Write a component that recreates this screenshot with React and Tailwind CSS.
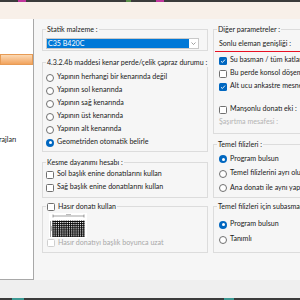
import React from "react";

function Radio({ checked, label }) {
  return (
    <div className="flex items-center gap-[3px] h-full">
      {checked ? (
        <span className="w-[8px] h-[8px] rounded-full bg-[#0067c0] flex items-center justify-center shrink-0">
          <span className="w-[3px] h-[3px] rounded-full bg-white" />
        </span>
      ) : (
        <span className="w-[8px] h-[8px] rounded-full border border-[#707070] bg-white shrink-0" />
      )}
      <span className="whitespace-nowrap">{label}</span>
    </div>
  );
}

function Check({ checked, label, disabled }) {
  return (
    <div className="flex items-center gap-[3px] h-full">
      {checked ? (
        <span className="w-[8px] h-[8px] rounded-[1.5px] bg-[#0067c0] flex items-center justify-center shrink-0">
          <svg width="6" height="6" viewBox="0 0 6 6">
            <path d="M1 3.2 L2.4 4.5 L5 1.6" stroke="white" strokeWidth="0.9" fill="none" />
          </svg>
        </span>
      ) : (
        <span
          className={`w-[8px] h-[8px] rounded-[1.5px] border bg-white shrink-0 ${
            disabled ? "border-[#cfcfcf]" : "border-[#707070]"
          }`}
        />
      )}
      <span className={`whitespace-nowrap ${disabled ? "text-[#a8a8a8]" : ""}`}>{label}</span>
    </div>
  );
}

function Group({ title, className, children, pad = "pl-[3px]" }) {
  return (
    <div className={`border border-[#dcdcdc] ${className}`}>
      <div className={`-mt-[5px] ${pad} flex`}>
        <div className="bg-[#f6f6f6] leading-[9px] h-[9px] px-[1px] whitespace-nowrap flex items-center">
          {title}
        </div>
      </div>
      <div className={pad}>{children}</div>
    </div>
  );
}

// hasır donatı preview drawing
function Mesh() {
  const vs = [];
  for (let i = 0; i <= 14; i++) vs.push(4 + i * 2.2);
  const hs = [];
  for (let i = 0; i <= 7; i++) hs.push(8.5 + i * 2.1);
  return (
    <svg width="38" height="25" viewBox="0 0 38 25" className="bg-white">
      <line x1="4" y1="3" x2="35" y2="3" stroke="#444" strokeWidth="0.5" />
      <line x1="4" y1="1.5" x2="4" y2="4.5" stroke="#444" strokeWidth="0.5" />
      <line x1="35" y1="1.5" x2="35" y2="4.5" stroke="#444" strokeWidth="0.5" />
      <rect x="17" y="1" width="5" height="1.2" fill="#bbb" />
      <line x1="1.5" y1="8" x2="1.5" y2="24" stroke="#444" strokeWidth="0.5" />
      <rect x="2" y="13" width="1" height="5" fill="#bbb" />
      {vs.map((x) => (
        <line key={"v" + x} x1={x} y1="7.5" x2={x} y2="24" stroke="#0a0a0a" strokeWidth="1" />
      ))}
      {hs.map((y) => (
        <line key={"h" + y} x1="3.5" y1={y} x2="35.5" y2={y} stroke="#0a0a0a" strokeWidth="1" />
      ))}
    </svg>
  );
}

export default function App() {
  return (
    <div className="w-[300px] h-[300px] overflow-hidden flex flex-col font-['Lato','Noto_Sans',sans-serif] text-[7.1px] text-[#1a1a1a] bg-[#f6f6f6]">
      {/* top taskbar strip */}
      <div className="h-[2px] bg-[#3b3b3b] flex shrink-0">
        <div className="w-[18px]" />
        <div className="w-[8px] bg-[#c0359c]" />
        <div className="w-[100px]" />
        <div className="w-[5px] bg-[#5b8f4a]" />
        <div className="w-[25px]" />
        <div className="w-[8px] bg-[#c0359c]" />
      </div>
      <div className="h-[17px] bg-[#f8f0e9] shrink-0" />

      <div className="flex h-[261px] shrink-0">
        {/* left list panel */}
        <div className="w-[34px] bg-white border-r border-b border-[#a8a8a8] shrink-0 flex flex-col">
          <div className="mt-[35px] h-[11px] w-[33px] border border-[#e79b55] bg-gradient-to-b from-[#fbd9b4] to-[#f1a35c]" />
          <div className="mt-[70px] leading-[9px] -ml-[1px]">rajları</div>
        </div>

        <div className="flex pl-[8px] gap-[5px] min-w-0">
          {/* left column */}
          <div className="w-[166px] shrink-0 flex flex-col">
            <Group title="Statik malzeme :" className="mt-[10px] h-[22px]">
              <div className="mt-[4px] h-[11px] w-[153px] border border-[#c8c8c8] bg-white flex items-stretch">
                <div className="flex-1 bg-[#0078d7] text-white leading-[9px] flex items-center pl-[1px]">
                  C35 B420C
                </div>
                <div className="w-[9px] flex items-center justify-center">
                  <svg width="5" height="3" viewBox="0 0 5 3">
                    <path d="M0.5 0.5 L2.5 2.5 L4.5 0.5" stroke="#777" strokeWidth="0.7" fill="none" />
                  </svg>
                </div>
              </div>
            </Group>

            <Group
              title="4.3.2.4b maddesi kenar perde/çelik çapraz durumu :"
              className="mt-[11px] h-[90px]"
            >
              <div className="mt-[4px] flex flex-col">
                <div className="h-[13px]"><Radio label="Yapının herhangi bir kenarında değil" /></div>
                <div className="h-[13px]"><Radio label="Yapının sol kenarında" /></div>
                <div className="h-[13px]"><Radio label="Yapının sağ kenarında" /></div>
                <div className="h-[13px]"><Radio label="Yapının üst kenarında" /></div>
                <div className="h-[13px]"><Radio label="Yapının alt kenarında" /></div>
                <div className="h-[13px]"><Radio checked label="Geometriden otomatik belirle" /></div>
              </div>
            </Group>

            <Group title="Kesme dayanımı hesabı :" className="mt-[10px] h-[36px]">
              <div className="mt-[1px] flex flex-col">
                <div className="h-[13px]"><Check label="Sol başlık enine donatılarını kullan" /></div>
                <div className="h-[13px]"><Check label="Sağ başlık enine donatılarını kullan" /></div>
              </div>
            </Group>

            <Group
              title={<Check label="Hasır donatı kullan" />}
              className="mt-[8px] h-[47px]"
            >
              <div className="mt-[2px] h-[25px] pl-[3px]">
                <Mesh />
              </div>
              <div className="h-[10px] pl-[1px]">
                <Check disabled label="Hasır donatıyı başlık boyunca uzat" />
              </div>
            </Group>
          </div>

          {/* right column */}
          <div className="w-[90px] shrink-0 flex flex-col">
            <Group title="Diğer parametreler :" className="mt-[10px] h-[105px] border-r-0">
              <div className="mt-[4px] h-[14px] -ml-[2px] border-b border-[#e81123] flex items-center pl-[4px] whitespace-nowrap">
                Sonlu eleman genişliği :
              </div>
              <div className="mt-[2px] flex flex-col pl-[2px]">
                <div className="h-[13px]"><Check checked label="Su basman / tüm katlarda aynı" /></div>
                <div className="h-[13px]"><Check label="Bu perde konsol döşemeyi taşıyor" /></div>
                <div className="h-[13px]"><Check checked label="Alt ucu ankastre mesnetli" /></div>
                <div className="h-[13px] mt-[10px]"><Check label="Manşonlu donatı eki :" /></div>
                <div className="h-[13px] flex items-center text-[#b4b4b4]">Şaşırtma mesafesi :</div>
              </div>
            </Group>

            <Group title="Temel filizleri :" className="mt-[10px] h-[54px] border-r-0">
              <div className="mt-[3px] flex flex-col pl-[2px]">
                <div className="h-[14.5px]"><Radio checked label="Program bulsun" /></div>
                <div className="h-[14.5px]"><Radio label="Temel filizlerini ayrı oluştur" /></div>
                <div className="h-[14.5px]"><Radio label="Ana donatı ile aynı yap" /></div>
              </div>
            </Group>

            <Group
              title="Temel filizleri için subasman yüksekliği :"
              className="mt-[8px] h-[47px] border-r-0"
            >
              <div className="mt-[6px] flex flex-col pl-[2px]">
                <div className="h-[15px]"><Radio checked label="Program bulsun" /></div>
                <div className="h-[15px]"><Radio label="Tanımlı" /></div>
              </div>
            </Group>
          </div>
        </div>
      </div>

      <div className="h-[18px] bg-[#efefef] shrink-0" />
      <div className="h-[2px] bg-[#3b3b3b] flex shrink-0">
        <div className="w-[12px]" />
        <div className="w-[12px] bg-[#3d9a94]" />
        <div className="w-[200px]" />
        <div className="w-[10px] bg-[#3d9a94]" />
      </div>
    </div>
  );
}
